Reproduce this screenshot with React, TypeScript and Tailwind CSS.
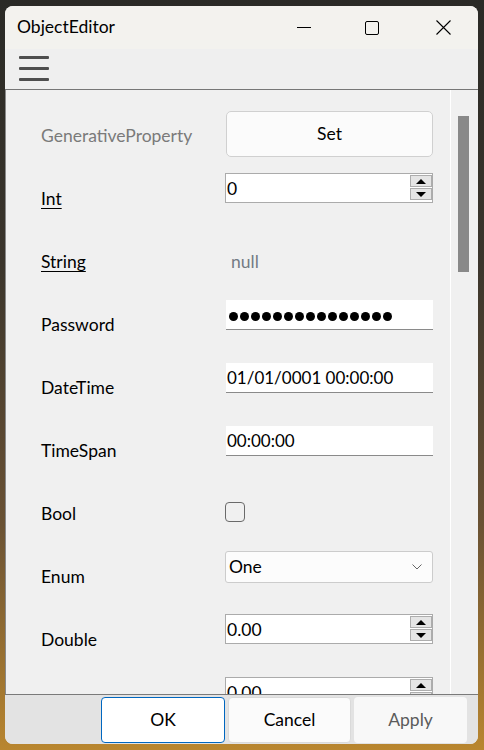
import React from "react";

const ui = "font-['Lato','Noto_Sans',sans-serif]";
const mono = "font-['Lato','Noto_Sans',sans-serif]";

function SpinBtns() {
  return (
    <div className="flex flex-col gap-[1px] mt-[1px] mb-[2px] self-stretch">
      <div className="w-[22px] h-[12px] bg-[#e5e5e5] border border-[#adadad] flex items-center justify-center">
        <div className="w-0 h-0 border-x-[5px] border-x-transparent border-b-[5px] border-b-black" />
      </div>
      <div className="w-[22px] h-[12px] bg-[#e5e5e5] border border-[#adadad] flex items-center justify-center">
        <div className="w-0 h-0 border-x-[5px] border-x-transparent border-t-[5px] border-t-black" />
      </div>
    </div>
  );
}

function Spinner({ value }: { value: string }) {
  return (
    <div className="w-[208px] h-[30px] border border-[#ababab] bg-white flex items-start">
      <span className={`flex-1 pl-[1px] pt-[1px] text-[17.5px] leading-[28px] text-black ${mono}`}>{value}</span>
      <SpinBtns />
    </div>
  );
}

function TextBox({ children }: { children: React.ReactNode }) {
  return (
    <div className="w-[207px] h-[30px] ml-[1px] mt-[1px] bg-white border-b border-[#8a8a8a] flex items-center pl-[1px]">
      {children}
    </div>
  );
}

function Row({ label, labelClass, children }: { label: string; labelClass?: string; children: React.ReactNode }) {
  return (
    <div className="h-[63px] flex items-start shrink-0">
      <div className={`w-[184px] h-[52px] flex items-center text-[17.5px] ${labelClass ?? "text-black"}`}>{label}</div>
      <div>{children}</div>
    </div>
  );
}

export default function App() {
  return (
    <div className={`w-[484px] h-[750px] overflow-hidden bg-[linear-gradient(180deg,#2a2a26_0%,#3b352c_35%,#6a5234_70%,#b9862f_100%)] pt-[6px] pl-[5px] ${ui}`}>
      <div className="w-[473px] h-[738px] rounded-[8px] overflow-hidden flex flex-col bg-[#f0f0f0]">
        {/* Title bar */}
        <div className="h-[43px] bg-[#f3f2ee] flex items-center shrink-0">
          <div className="pl-[12px] text-[17.5px] text-black leading-none pb-[1px]">ObjectEditor</div>
          <div className="flex-1" />
          <div className="w-[14px] h-[1px] bg-black mr-[54px]" />
          <div className="w-[14px] h-[14px] border border-black rounded-[2px] mr-[57px]" />
          <svg width="15" height="15" viewBox="0 0 15 15" className="mr-[27px]">
            <path d="M0.5 0.5 L14.5 14.5 M14.5 0.5 L0.5 14.5" stroke="#000" strokeWidth="1.1" />
          </svg>
        </div>
        {/* Toolbar */}
        <div className="h-[41px] bg-[#efefef] border-b border-[#767676] shrink-0 flex flex-col gap-[8px] pl-[14px] pt-[7px]">
          <div className="w-[30px] h-[3px] bg-[#4e4e4e] rounded-[1px]" />
          <div className="w-[30px] h-[3px] bg-[#4e4e4e] rounded-[1px]" />
          <div className="w-[30px] h-[3px] bg-[#4e4e4e] rounded-[1px]" />
        </div>
        {/* Content */}
        <div className="h-[604px] flex shrink-0 border-l border-[#8a8a8a]">
          <div className="w-[445px] overflow-hidden pt-[20px] pl-[35px] flex flex-col border-r border-white">
            <Row label="GenerativeProperty" labelClass="text-[#7a7a7a]">
              <div className="w-[207px] h-[46px] mt-[1px] ml-[1px] rounded-[5px] border border-[#d0d0d0] bg-[#fbfbfb] flex items-center justify-center text-[17.5px] text-black">
                Set
              </div>
            </Row>
            <Row label="Int" labelClass="text-black underline underline-offset-[3px] decoration-1">
              <Spinner value="0" />
            </Row>
            <Row label="String" labelClass="text-black underline underline-offset-[3px] decoration-1">
              <div className="h-[52px] flex items-center pl-[6px] text-[17.5px] text-[#737b84]">null</div>
            </Row>
            <Row label="Password">
              <TextBox>
                <div className="flex gap-[2px] pl-[2px] pt-[3px]">
                  {Array.from({ length: 15 }).map((_, i) => (
                    <span key={i} className="w-[9px] h-[9px] rounded-full bg-black" />
                  ))}
                </div>
              </TextBox>
            </Row>
            <Row label="DateTime">
              <TextBox>
                <span className={`text-[17px] text-black ${mono}`}>01/01/0001 00:00:00</span>
              </TextBox>
            </Row>
            <Row label="TimeSpan">
              <TextBox>
                <span className={`text-[17px] text-black ${mono}`}>00:00:00</span>
              </TextBox>
            </Row>
            <Row label="Bool">
              <div className="w-[20px] h-[20px] mt-[14px] rounded-[4px] border border-[#6a6a6a]" />
            </Row>
            <Row label="Enum">
              <div className="w-[208px] h-[32px] rounded-[3px] border border-[#cccccc] bg-[#fcfcfc] flex items-center pl-[3px] pr-[10px]">
                <span className="flex-1 text-[17.5px] text-black">One</span>
                <svg width="10" height="6" viewBox="0 0 10 6">
                  <path d="M0.5 0.5 L5 5 L9.5 0.5" fill="none" stroke="#666" strokeWidth="1" />
                </svg>
              </div>
            </Row>
            <Row label="Double">
              <Spinner value="0.00" />
            </Row>
            <Row label="">
              <Spinner value="0.00" />
            </Row>
          </div>
          <div className="flex-1 bg-[#f0f0f0] pl-[7px] pt-[26px]">
            <div className="w-[11px] h-[156px] bg-[#898989]" />
          </div>
        </div>
        {/* Footer */}
        <div className="flex-1 border-t border-[#7a7a7a] bg-[#e3e3e3] flex items-start pt-[2px] pl-[96px] gap-[3px]">
          <div className="w-[124px] h-[46px] rounded-[4px] border border-[#0067c0] bg-white flex items-center justify-center text-[17.5px] text-black">
            OK
          </div>
          <div className="w-[123px] h-[46px] rounded-[4px] border border-[#dadada] bg-[#fbfbfb] flex items-center justify-center text-[17.5px] text-black">
            Cancel
          </div>
          <div className="w-[113px] h-[46px] rounded-[4px] bg-[#f8f8f8] flex items-center justify-center text-[17.5px] text-[#5b5b5b]">
            Apply
          </div>
        </div>
      </div>
    </div>
  );
}
